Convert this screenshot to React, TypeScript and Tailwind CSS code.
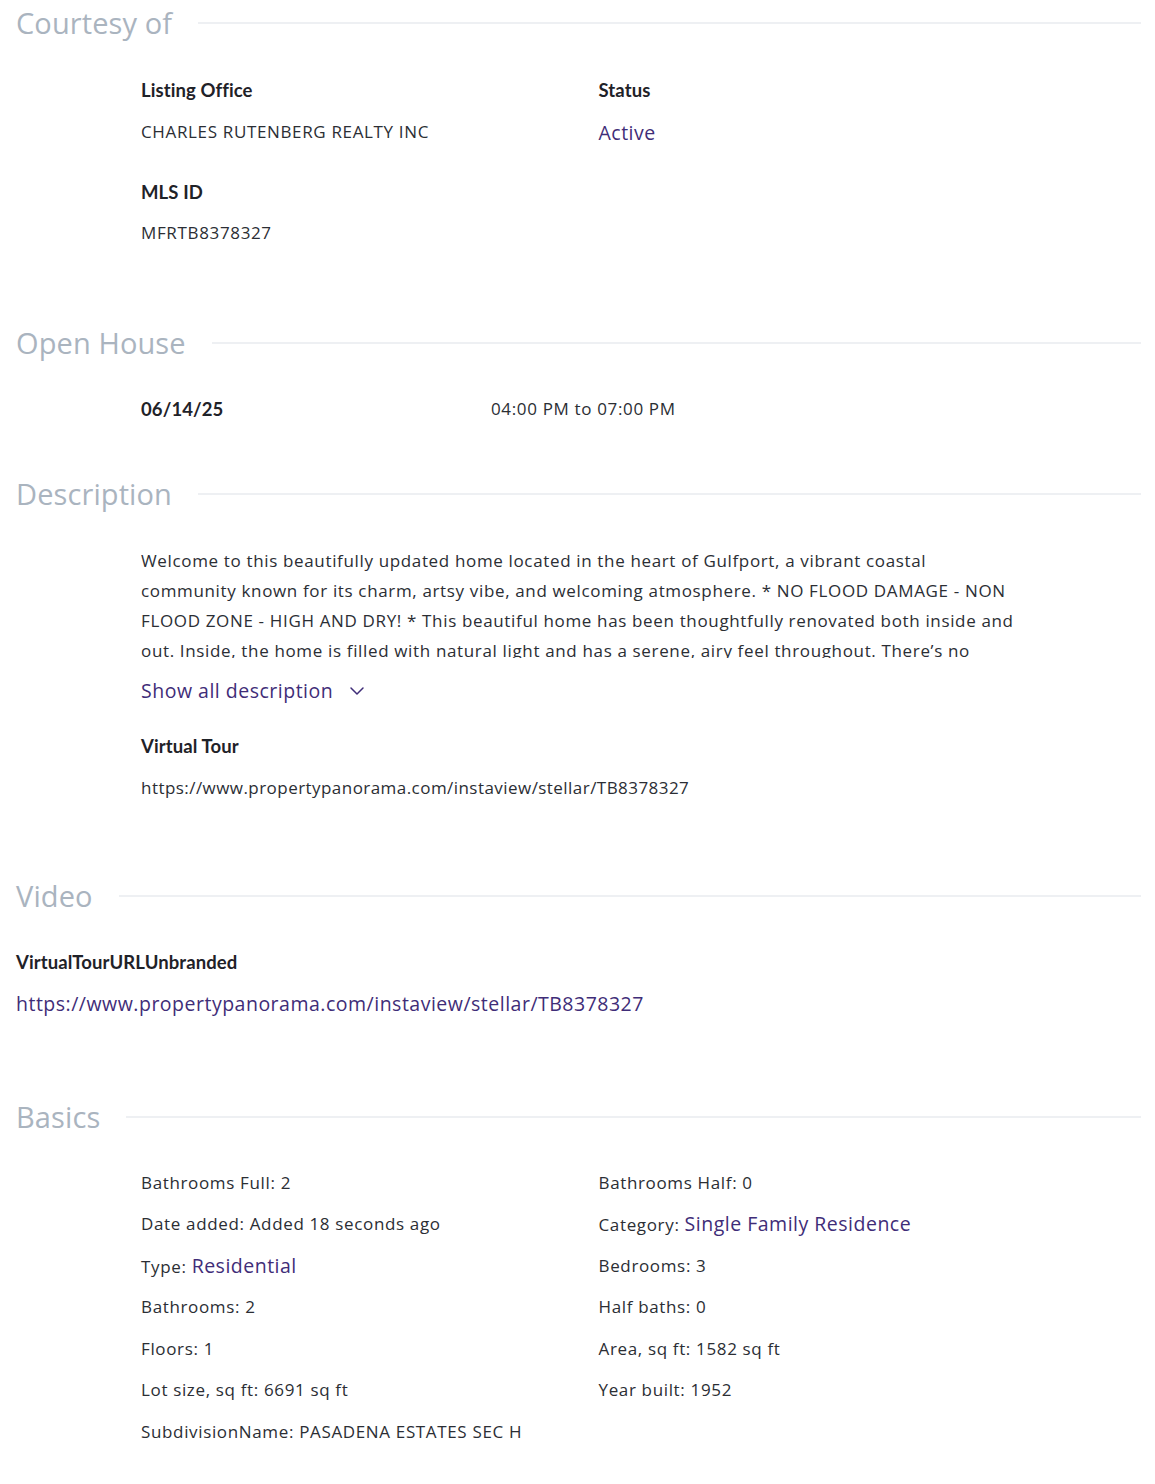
import { ChevronDown } from "lucide-react";

const body = "font-['Open_Sans',sans-serif] tracking-[0.65px]";
const label = "font-['Lato',sans-serif] font-bold text-[18.5px] tracking-[0.1px] text-[#1f2228]";
const link = "text-[#3f2d78] text-[19.5px] tracking-[0.5px]";

function SectionTitle({ title }: { title: string }) {
    return (
        <div className="flex items-center gap-[26px]">
            <h2 className="text-[29px] leading-[34px] tracking-[0.1px] text-[#aab4bf] whitespace-nowrap">{title}</h2>
            <div className="flex-1 h-[2px] bg-[#eef0f3]" />
        </div>
    );
}

const basicsLeft: [string, string, boolean?][] = [
    ["Bathrooms Full", "2"],
    ["Date added", "Added 18 seconds ago"],
    ["Type", "Residential", true],
    ["Bathrooms", "2"],
    ["Floors", "1"],
    ["Lot size, sq ft", "6691 sq ft"],
    ["SubdivisionName", "PASADENA ESTATES SEC H"],
];

const basicsRight: [string, string, boolean?][] = [
    ["Bathrooms Half", "0"],
    ["Category", "Single Family Residence", true],
    ["Bedrooms", "3"],
    ["Half baths", "0"],
    ["Area, sq ft", "1582 sq ft"],
    ["Year built", "1952"],
];

const descLines = [
    "Welcome to this beautifully updated home located in the heart of Gulfport, a vibrant coastal",
    "community known for its charm, artsy vibe, and welcoming atmosphere. * NO FLOOD DAMAGE - NON",
    "FLOOD ZONE - HIGH AND DRY! * This beautiful home has been thoughtfully renovated both inside and",
    "out. Inside, the home is filled with natural light and has a serene, airy feel throughout. There’s no",
];

function Fact({ k, v, isLink }: { k: string; v: string; isLink?: boolean }) {
    return (
        <div className="h-[41.5px] flex items-center">
            <span className="text-[17px] text-[#2b2e34]">
                {k}: {isLink ? <span className={link}>{v}</span> : v}
            </span>
        </div>
    );
}

export default function App() {
    return (
        <div className={`${body} bg-white w-[1155px] min-h-[1484px] pl-[16px] pr-[14px] pt-[6px] text-[#2b2e34]`}>
            {/* Courtesy of */}
            <SectionTitle title="Courtesy of" />
            <div className="pl-[125px] pt-[37px] grid grid-cols-2 w-[1040px]">
                <div>
                    <div className={label}>Listing Office</div>
                    <div className="text-[17px] mt-[14px]">CHARLES RUTENBERG REALTY INC</div>
                    <div className={`${label} mt-[35px]`}>MLS ID</div>
                    <div className="text-[17px] mt-[13px]">MFRTB8378327</div>
                </div>
                <div>
                    <div className={label}>Status</div>
                    <div className={`${link} mt-[13px]`}>Active</div>
                </div>
            </div>

            {/* Open House */}
            <div className="mt-[80px]">
                <SectionTitle title="Open House" />
            </div>
            <div className="pl-[125px] pt-[36px] flex">
                <div className={`${label} w-[350px]`}>06/14/25</div>
                <div className="text-[17px]">04:00 PM to 07:00 PM</div>
            </div>

            {/* Description */}
            <div className="mt-[54px]">
                <SectionTitle title="Description" />
            </div>
            <div className="pl-[125px] pt-[35px]">
                <div className="text-[17px] leading-[30px] h-[112px] overflow-hidden">
                    {descLines.map((l) => (
                        <div key={l} className="whitespace-nowrap">{l}</div>
                    ))}
                </div>
                <button className={`flex items-center gap-[12px] mt-[18px] ${link}`}>
                    Show all description
                    <ChevronDown size={24} strokeWidth={1.5} />
                </button>
                <div className={`${label} mt-[27px]`}>Virtual Tour</div>
                <div className="text-[17px] mt-[15px] tracking-[0.45px]">https://www.propertypanorama.com/instaview/stellar/TB8378327</div>
            </div>

            {/* Video */}
            <div className="mt-[78px]">
                <SectionTitle title="Video" />
            </div>
            <div className="pt-[36px]">
                <div className={label}>VirtualTourURLUnbranded</div>
                <div className={`${link} mt-[12px]`}>https://www.propertypanorama.com/instaview/stellar/TB8378327</div>
            </div>

            {/* Basics */}
            <div className="mt-[82px]">
                <SectionTitle title="Basics" />
            </div>
            <div className="pl-[125px] pt-[28px] grid grid-cols-2 w-[1040px]">
                <div>
                    {basicsLeft.map(([k, v, l]) => (
                        <Fact key={k} k={k} v={v} isLink={l} />
                    ))}
                </div>
                <div>
                    {basicsRight.map(([k, v, l]) => (
                        <Fact key={k} k={k} v={v} isLink={l} />
                    ))}
                </div>
            </div>
        </div>
    );
}
